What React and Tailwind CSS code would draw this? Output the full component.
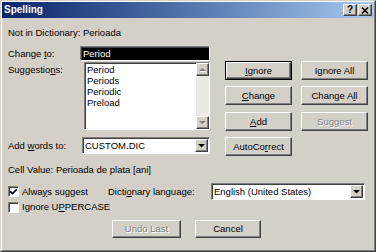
import React from 'react';

const font = "font-['Liberation_Sans',Arial,sans-serif]";

const Btn = ({ children, def = false, disabled = false, w = 'w-[67px]', h = 'h-[19px]' }) => {
  const inner = (
    <div className="flex flex-1 items-center justify-center border border-t-white border-l-white border-r-[#404040] border-b-[#404040] shadow-[inset_-1px_-1px_#808080] bg-[#d4d0c8]">
      <span className={disabled ? 'text-[#808080] [text-shadow:1px_1px_0_#fff]' : 'text-black'}>{children}</span>
    </div>
  );
  if (def) {
    return <div className={`flex ${w} ${h} border border-black`}>{inner}</div>;
  }
  return <div className={`flex ${w} ${h}`}>{inner}</div>;
};

const Sunken = ({ className, children }) => (
  <div className={`border border-t-[#808080] border-l-[#808080] border-r-white border-b-white shadow-[inset_1px_1px_#404040] ${className}`}>
    {children}
  </div>
);

const Arrow = ({ up = false, disabled = false }) => (
  <div className="flex w-[13px] items-center justify-center border border-t-white border-l-white border-r-[#404040] border-b-[#404040] shadow-[inset_-1px_-1px_#808080] bg-[#d4d0c8]">
    <svg width="7" height="4" viewBox="0 0 7 4">
      {disabled && <path d={up ? 'M1 4 L4 1 L7 4 Z' : 'M1 1 L7 1 L4 4 Z'} fill="#fff" />}
      <path d={up ? 'M0 3 L3.5 0 L7 3 Z' : 'M0 0 L7 0 L3.5 3.5 Z'} fill={disabled ? '#808080' : '#000'} />
    </svg>
  </div>
);

const Check = ({ checked }) => (
  <Sunken className="w-[11px] h-[11px] bg-white flex items-center justify-center">
    {checked && (
      <svg width="7" height="7" viewBox="0 0 7 7">
        <path d="M0 3 L2.5 5.5 L7 1" stroke="#000" strokeWidth="1.6" fill="none" />
      </svg>
    )}
  </Sunken>
);

const TitleBtn = ({ children }) => (
  <div className="flex w-[14px] h-[12px] items-center justify-center border border-t-white border-l-white border-r-[#404040] border-b-[#404040] shadow-[inset_-1px_-1px_#808080] bg-[#d4d0c8]">
    {children}
  </div>
);

export default function App() {
  const suggestions = ['Period', 'Periods', 'Periodic', 'Preload'];
  return (
    <div className={`w-[376px] h-[252px] bg-[#d4d0c8] border border-t-[#d4d0c8] border-l-[#d4d0c8] border-r-[#404040] border-b-[#404040] ${font} text-[9.5px] leading-[12px] text-black`}>
      <div className="h-full flex flex-col border border-t-white border-l-white border-r-[#808080] border-b-[#808080]">
        <div className="h-[16px] flex items-center justify-between pl-[2px] pr-[2px] bg-linear-to-r from-[#0a246a] to-[#a6caf0]">
          <span className="text-white font-bold text-[10px]">Spelling</span>
          <div className="flex gap-[1px]">
            <TitleBtn>
              <span className="font-bold text-[10px] leading-[10px]">?</span>
            </TitleBtn>
            <TitleBtn>
              <svg width="8" height="7" viewBox="0 0 8 7">
                <path d="M1 0.5 L7 6.5 M7 0.5 L1 6.5" stroke="#000" strokeWidth="1.6" />
              </svg>
            </TitleBtn>
          </div>
        </div>

        <div className="px-[6px] flex flex-col">
          <div className="mt-[9px] h-[12px]">Not in Dictionary: Perioada</div>

          <div className="mt-[7px] flex">
            <div className="w-[202px] flex flex-col">
              <div className="flex items-center h-[15px]">
                <span className="w-[72px]">Change <span className="underline">t</span>o:</span>
                <Sunken className="w-[130px] h-[15px] bg-black flex items-center pl-[2px]">
                  <span className="text-white">Period</span>
                </Sunken>
              </div>
              <div className="flex mt-[1px]">
                <span className="w-[76px] pt-[2px]">Suggestio<span className="underline">n</span>s:</span>
                <Sunken className="w-[126px] h-[68px] bg-white flex">
                  <div className="flex-1 flex flex-col pl-[2px] pt-[1px] leading-[11px]">
                    {suggestions.map((s) => (
                      <span key={s}>{s}</span>
                    ))}
                  </div>
                  <div className="w-[13px] flex flex-col bg-[#ebe9e5]">
                    <div className="h-[13px] flex"><Arrow up disabled /></div>
                    <div className="flex-1" />
                    <div className="h-[13px] flex"><Arrow disabled /></div>
                  </div>
                </Sunken>
              </div>
              <div className="flex items-center mt-[7px]">
                <span className="w-[74px]">Add <span className="underline">w</span>ords to:</span>
                <Sunken className="w-[128px] h-[17px] bg-white flex">
                  <span className="flex-1 pl-[2px] self-center">CUSTOM.DIC</span>
                  <div className="flex py-[1px] pr-[1px]"><Arrow /></div>
                </Sunken>
              </div>
            </div>

            <div className="ml-[15px] pt-[15px] flex flex-col">
              <div className="flex gap-[9px]">
                <Btn def><span className="underline">I</span>gnore</Btn>
                <Btn>I<span className="underline">g</span>nore All</Btn>
              </div>
              <div className="flex gap-[9px] mt-[6px]">
                <Btn><span className="underline">C</span>hange</Btn>
                <Btn>Change A<span className="underline">l</span>l</Btn>
              </div>
              <div className="flex gap-[9px] mt-[7px]">
                <Btn><span className="underline">A</span>dd</Btn>
                <Btn disabled>Suggest</Btn>
              </div>
              <div className="flex gap-[9px] mt-[6px]">
                <Btn>AutoCo<span className="underline">r</span>rect</Btn>
              </div>
            </div>
          </div>

          <div className="mt-[8px] h-[12px]">Cell Value: Perioada de plata [ani]</div>

          <div className="mt-[7px] flex items-center h-[17px]">
            <div className="w-[100px] flex items-center gap-[3px]">
              <Check checked />
              <span>Alwa<span className="underline">y</span>s suggest</span>
            </div>
            <span className="w-[103px]">Dicti<span className="underline">o</span>nary language:</span>
            <Sunken className="w-[154px] h-[17px] bg-white flex">
              <span className="flex-1 pl-[2px] self-center">English (United States)</span>
              <div className="flex py-[1px] pr-[1px]"><Arrow /></div>
            </Sunken>
          </div>

          <div className="mt-[1px] flex items-center h-[12px] gap-[3px]">
            <Check />
            <span>Ignore U<span className="underline">P</span>PERCASE</span>
          </div>

          <div className="mt-[7px] flex pl-[104px] gap-[14px]">
            <Btn disabled w="w-[69px]" h="h-[18px]">Undo Last</Btn>
            <Btn w="w-[66px]" h="h-[18px]">Cancel</Btn>
          </div>
        </div>
      </div>
    </div>
  );
}
